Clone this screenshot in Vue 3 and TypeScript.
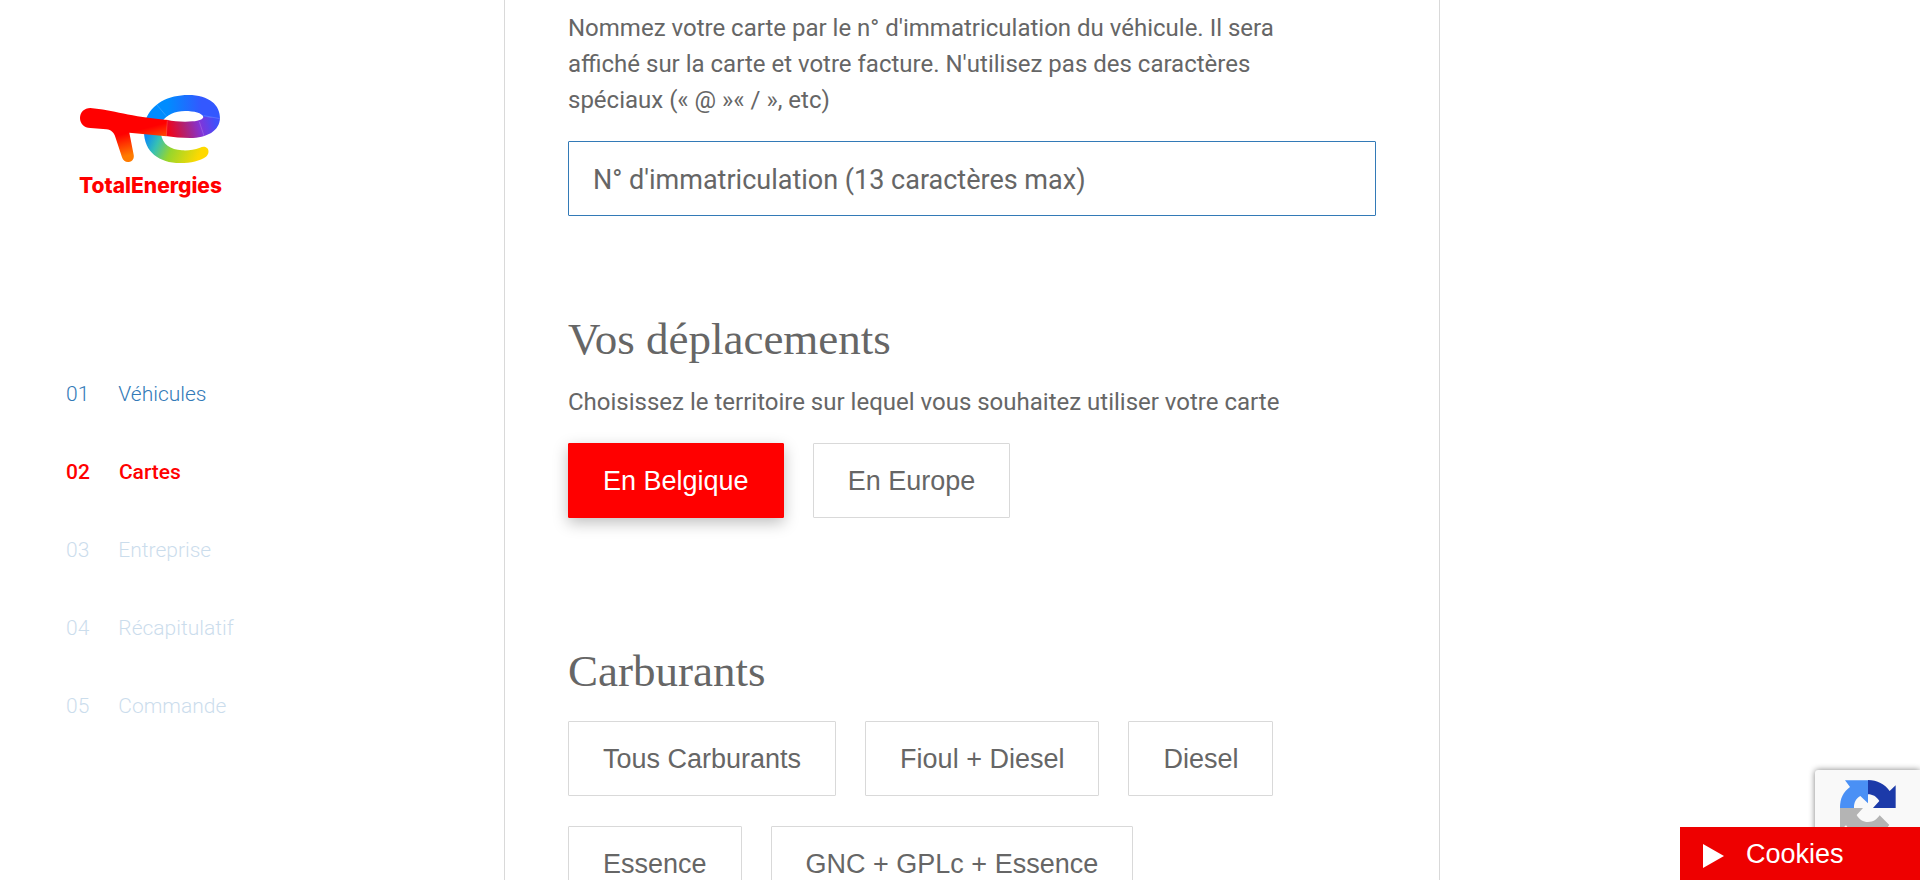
<script setup lang="ts">
import { ref } from 'vue'

interface Step {
  num: string
  label: string
  state: 'done' | 'active' | 'todo'
}

const steps: Step[] = [
  { num: '01', label: 'Véhicules', state: 'done' },
  { num: '02', label: 'Cartes', state: 'active' },
  { num: '03', label: 'Entreprise', state: 'todo' },
  { num: '04', label: 'Récapitulatif', state: 'todo' },
  { num: '05', label: 'Commande', state: 'todo' },
]

const territories: string[] = ['En Belgique', 'En Europe']
const fuels: string[] = ['Tous Carburants', 'Fioul + Diesel', 'Diesel', 'Essence', 'GNC + GPLc + Essence']

const plate = ref('')
const territory = ref('En Belgique')
const fuel = ref('')
</script>

<template>
  <div class="page">
    <aside class="sidebar">
      <a class="logo" href="#">
        <svg class="logo-mark" viewBox="57 42 429 210" aria-hidden="true">
          <defs>
            <linearGradient id="bowl" gradientUnits="userSpaceOnUse" x1="255" y1="0" x2="480" y2="0">
              <stop offset="0.3" stop-color="#008cff" />
              <stop offset="0.75" stop-color="#3358ff" />
            </linearGradient>
            <linearGradient id="band" gradientUnits="userSpaceOnUse" x1="320" y1="150" x2="465" y2="115">
              <stop offset="0" stop-color="#f80010" />
              <stop offset="0.35" stop-color="#b3206f" />
              <stop offset="0.68" stop-color="#8134d8" />
              <stop offset="1" stop-color="#3f50fb" />
            </linearGradient>
            <linearGradient id="hook" gradientUnits="userSpaceOnUse" x1="262" y1="165" x2="415" y2="235">
              <stop offset="0" stop-color="#0d8df2" />
              <stop offset="0.22" stop-color="#36c0b4" />
              <stop offset="0.5" stop-color="#98d62c" />
              <stop offset="1" stop-color="#ffd900" />
            </linearGradient>
            <linearGradient id="stem" gradientUnits="userSpaceOnUse" x1="180" y1="165" x2="200" y2="240">
              <stop offset="0" stop-color="#ff0000" />
              <stop offset="0.85" stop-color="#ff7b00" />
            </linearGradient>
          </defs>
          <path fill="url(#hook)" d="M252 155C252 215 298 249 360 249C394 249 420 242 438 230C447 223 448 210 441 204C435 199 427 200 420 203C402 210 385 212 366 211C332 209 306 194 303 160Z" />
          <path fill="url(#bowl)" d="M256 122C275 70 325 45 385 45C447 45 481 75 480 116L430 111C427 99 402 93 375 93C345 93 320 104 307 124Z" />
          <path fill="url(#band)" d="M480 114C479 153 440 174 390 174C365 174 340 171 317 168L320 119C345 125 375 126 397 124C419 122 429 118 430 110Z" />
          <path fill="url(#stem)" d="M91 84C160 90 210 110 322 120L319 169L208 158L221 224C223 235 218 244 206 246C197 247 189 242 186 232L166 171C162 158 154 150 139 148L91 144C72 144 60 130 60 114C60 97 73 84 91 84Z" />
          <path fill="none" stroke="#fff" stroke-width="2" stroke-opacity="0.25" d="M291 75L318 107M431 107L480 116M418 125L432 168M322 121L319 168" />
        </svg>
        <span class="logo-name">TotalEnergies</span>
      </a>
      <nav aria-label="Étapes">
        <ol class="steps">
          <li v-for="s in steps" :key="s.num">
            <a href="#" class="step" :class="s.state" :aria-current="s.state === 'active' ? 'step' : undefined">
              <span>{{ s.num }}</span>
              <span>{{ s.label }}</span>
            </a>
          </li>
        </ol>
      </nav>
    </aside>

    <main class="content">
      <section>
        <p class="text narrow">
          <label for="plate">Nommez votre carte par le n° d'immatriculation du véhicule. Il sera affiché sur la carte et votre facture. N'utilisez pas des caractères spéciaux (« @ »« / », etc)</label>
        </p>
        <input id="plate" v-model="plate" class="field" type="text" maxlength="13" placeholder="N° d'immatriculation (13 caractères max)" />
      </section>

      <section>
        <h2>Vos déplacements</h2>
        <p class="text after-title">Choisissez le territoire sur lequel vous souhaitez utiliser votre carte</p>
        <div class="choices">
          <button v-for="t in territories" :key="t" type="button" class="choice" :class="{ selected: territory === t }" :aria-pressed="territory === t" @click="territory = t">{{ t }}</button>
        </div>
      </section>

      <section>
        <h2>Carburants</h2>
        <div class="choices after-heading">
          <button v-for="f in fuels" :key="f" type="button" class="choice" :class="{ selected: fuel === f }" :aria-pressed="fuel === f" @click="fuel = f">{{ f }}</button>
        </div>
      </section>
    </main>

    <div class="captcha">
      <svg viewBox="0 0 168 168" aria-hidden="true">
        <path fill="#4a90f5" d="M0 84C0 54 10 36 30 21L15 1H84V70L61 48C47 56 42 68 42 84Z" />
        <path fill="#1c3aa9" d="M84 0C112 1 134 12 149 33L167 16V84H99L118 63C109 49 98 43 84 43Z" />
        <path fill="#b4b4b4" d="M0 84H69L50 105C58 119 69 126 84 126C100 126 110 119 119 106L148 135C132 157 110 168 84 168C56 168 34 157 18 136L0 152Z" />
      </svg>
    </div>

    <button type="button" class="cookies">
      <svg viewBox="0 0 21 24" aria-hidden="true"><path fill="#fff" d="M0 0L21 12L0 24Z" /></svg>
      <span>Cookies</span>
    </button>
  </div>
</template>

<style>
body {
  margin: 0;
  background: #fff;
}
</style>

<style scoped>
.page {
  display: grid;
  grid-template-columns: minmax(0, 504fr) minmax(0, 936fr) minmax(0, 480fr);
  height: 100vh;
  overflow: hidden;
  color: #666;
  font-family: Roboto, "Liberation Sans", sans-serif;
}

.sidebar {
  padding: 94px 66px 0;
}

.logo {
  display: block;
  width: 143px;
  margin-left: 13px;
  color: #f00;
  text-decoration: none;
}

.logo-mark {
  display: block;
  width: 143px;
  height: 70px;
}

.logo-name {
  display: block;
  margin-top: 8px;
  font: 800 21px/28px Inter, "Open Sans", sans-serif;
}

.steps {
  display: flex;
  flex-direction: column;
  gap: 42px;
  margin: 176px 0 0;
  padding: 0;
  list-style: none;
}

.step {
  display: flex;
  gap: 29px;
  color: #337ab7;
  font-size: 21px;
  font-weight: 300;
  line-height: 36px;
  text-decoration: none;
}

.step.active {
  color: #f00;
  font-weight: 500;
}

.step.todo {
  opacity: 0.25;
}

.content {
  box-sizing: border-box;
  display: flex;
  flex-direction: column;
  gap: 95px;
  padding: 10px 63px 0;
  border: solid #d9d9d9;
  border-width: 0 1px;
  overflow-y: auto;
  scrollbar-width: none;
}

.text {
  margin: 0 0 23px;
  font-size: 24px;
  line-height: 36px;
}

.narrow {
  max-width: 720px;
}

h2 {
  margin: 0;
  font: 400 45px/56px "Liberation Serif", serif;
}

.after-title {
  margin-top: 17px;
}

.after-heading {
  margin-top: 22px;
}

.field {
  box-sizing: border-box;
  display: block;
  width: 100%;
  height: 75px;
  padding: 2px 24px 0;
  border: 1px solid #337ab7;
  border-radius: 1px;
  background: #fff;
  color: #666;
  font: 400 27px/36px Roboto, sans-serif;
}

.field::placeholder {
  color: #666;
  opacity: 1;
}

.choices {
  display: flex;
  flex-wrap: wrap;
  gap: 30px 29px;
  padding-bottom: 30px;
}

.choice {
  height: 75px;
  padding: 0 34px;
  border: 1px solid #d9d9d9;
  border-radius: 1px;
  background: #fff;
  color: #666;
  font: 400 27px/36px "Liberation Sans", sans-serif;
  cursor: pointer;
}

.choice.selected {
  border-color: #f00;
  background: #f00;
  color: #fff;
  box-shadow: 0 5px 15px rgba(0, 0, 0, 0.25);
}

.captcha {
  position: fixed;
  right: 0;
  bottom: 20px;
  box-sizing: border-box;
  width: 105px;
  height: 90px;
  padding: 10px 24px 0 25px;
  border-radius: 3px 0 0 3px;
  background: #f9f9f9;
  box-shadow: 0 0 6px #808080;
}

.captcha svg {
  display: block;
  width: 56px;
  height: 56px;
}

.cookies {
  position: fixed;
  right: 0;
  bottom: 0;
  display: flex;
  align-items: center;
  gap: 22px;
  width: 240px;
  height: 53px;
  padding: 0 23px;
  border: 0;
  background: #e00;
  color: #fff;
  font: 400 27px/36px "Liberation Sans", sans-serif;
  cursor: pointer;
}

.cookies svg {
  width: 21px;
  height: 24px;
  padding-top: 4px;
}
</style>
